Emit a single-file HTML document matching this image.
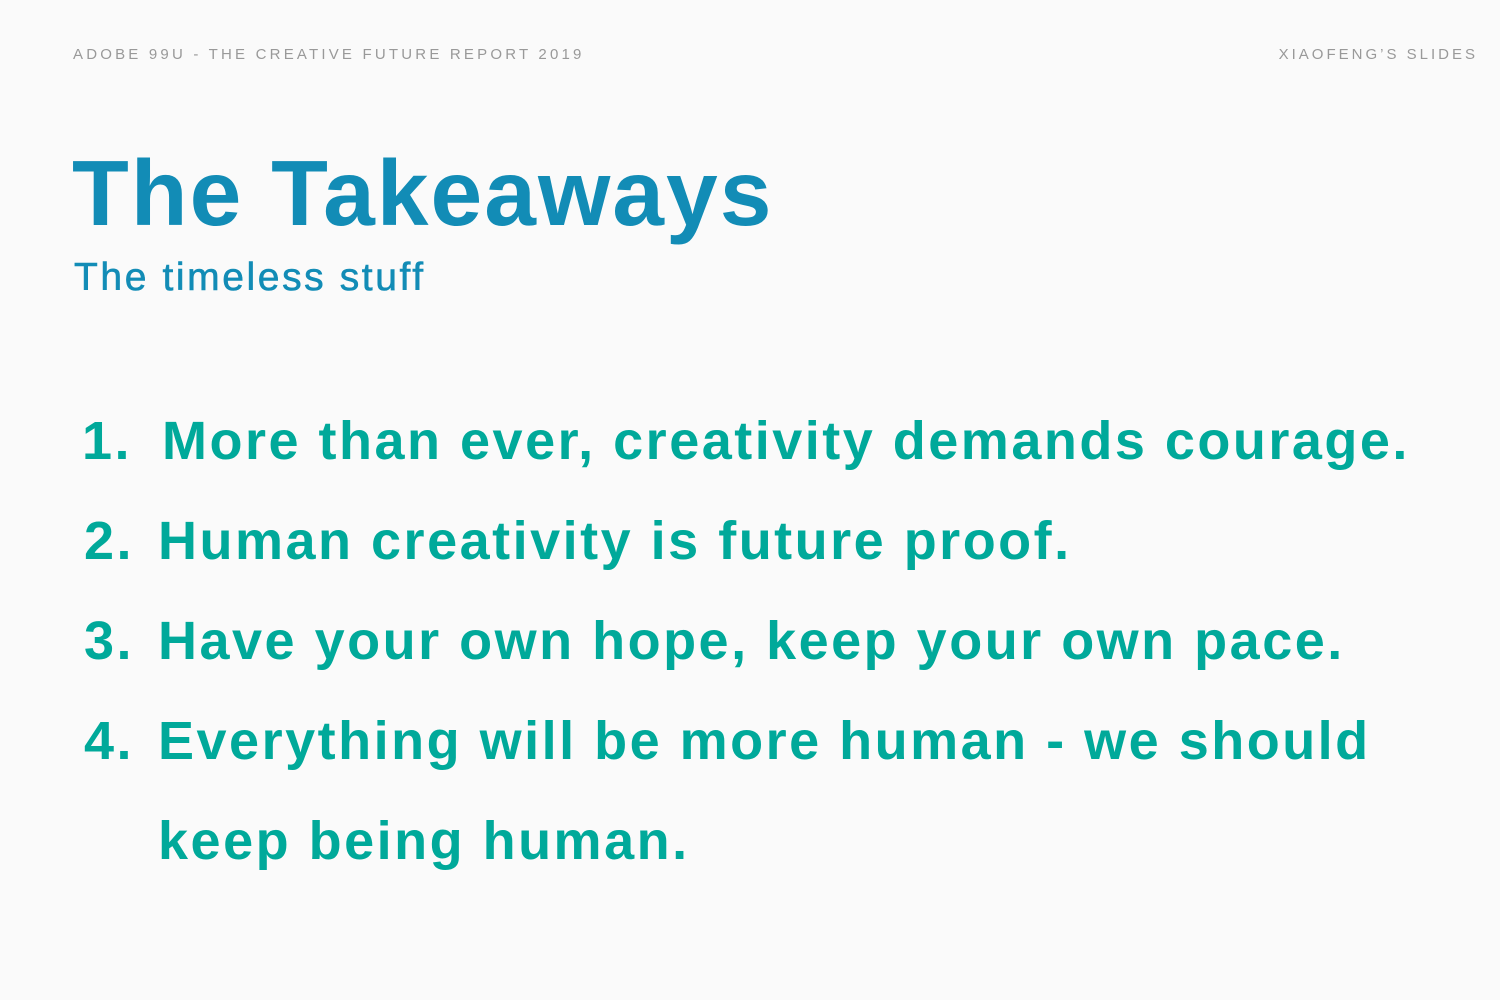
<!DOCTYPE html>
<html><head><style>
body{margin:0;width:1500px;height:1000px;background:#fafafa;font-family:"Liberation Sans",sans-serif;position:relative;overflow:hidden}
.h{position:absolute;top:46px;font-size:15px;letter-spacing:3.2px;color:#999;white-space:nowrap}
.t{position:absolute;left:72px;top:140px;font-size:93px;font-weight:bold;color:#128cb6;letter-spacing:2px;white-space:nowrap}
.s{position:absolute;left:74px;top:256px;font-size:39px;color:#128cb6;letter-spacing:2.6px;white-space:nowrap;-webkit-text-stroke:0.6px #128cb6}
.l{position:absolute;font-size:54px;font-weight:bold;color:#00a99a;white-space:nowrap;letter-spacing:2.5px}
</style></head><body>
<div class="h" style="left:73px">ADOBE 99U - THE CREATIVE FUTURE REPORT 2019</div>
<div class="h" style="right:22px;letter-spacing:3px">XIAOFENG’S SLIDES</div>
<div class="t">The Takeaways</div>
<div class="s">The timeless stuff</div>
<div class="l" style="left:82px;top:410px">1.</div><div class="l" style="left:162px;top:410px">More than ever, creativity demands courage.</div>
<div class="l" style="left:84px;top:510px">2.</div><div class="l" style="left:158px;top:510px">Human creativity is future proof.</div>
<div class="l" style="left:84px;top:610px">3.</div><div class="l" style="left:158px;top:610px">Have your own hope, keep your own pace.</div>
<div class="l" style="left:84px;top:710px">4.</div><div class="l" style="left:158px;top:710px">Everything will be more human - we should</div>
<div class="l" style="left:158px;top:810px">keep being human.</div>
</body></html>
